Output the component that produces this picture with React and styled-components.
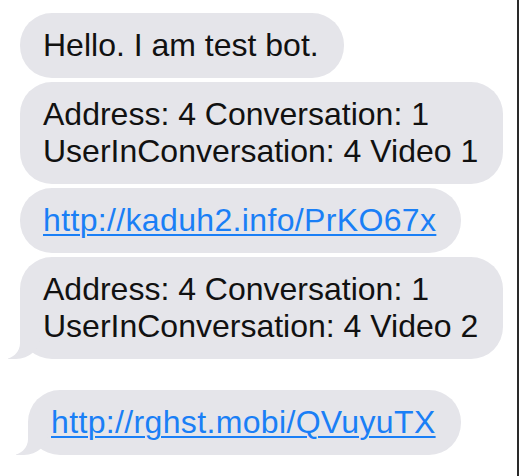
import React from "react";
import styled, { createGlobalStyle, css } from "styled-components";

const Global = createGlobalStyle`
  html, body { margin: 0; padding: 0; background: #fff; }
  body { font-family: "Liberation Sans", Arial, sans-serif; }
`;

const Page = styled.div`
  box-sizing: border-box;
  width: 519px;
  height: 476px;
  border-right: 2px solid #2a2a2a;
  padding: 13px 0 0 20px;
  display: flex;
  flex-direction: column;
  align-items: flex-start;
  gap: 4px;
  overflow: hidden;
`;

const Bubble = styled.div`
  position: relative;
  box-sizing: border-box;
  background: #e5e5ea;
  color: #111;
  font-size: 32px;
  line-height: 37px;
  padding: 14px 25px 14px 23px;
  border-radius: 32px;
  margin-left: ${(p) => p.$indent || 0}px;
  margin-top: ${(p) => p.$offset || 0}px;
  white-space: nowrap;

  ${(p) =>
    p.$tail &&
    css`
      &::before {
        content: "";
        position: absolute;
        z-index: 0;
        bottom: 0;
        left: -12px;
        width: 32px;
        height: 34px;
        background: #e5e5ea;
        border-bottom-right-radius: 24px 22px;
      }
      &::after {
        content: "";
        position: absolute;
        z-index: 1;
        bottom: 0;
        left: -34px;
        width: 34px;
        height: 34px;
        background: #fff;
        border-bottom-right-radius: 16px;
      }
    `}
`;

const Text = styled.span`
  position: relative;
  z-index: 2;
`;

const Link = styled.a`
  position: relative;
  z-index: 2;
  color: #1a7ff6;
  letter-spacing: 0.35px;
  text-decoration: underline;
  text-decoration-thickness: 1.5px;
  text-underline-offset: 3px;
`;

export default function App() {
  return (
    <>
      <Global />
      <Page>
        <Bubble>
          <Text>Hello. I am test bot.</Text>
        </Bubble>
        <Bubble>
          <Text>
            Address: 4 Conversation: 1
            <br />
            UserInConversation: 4 Video 1
          </Text>
        </Bubble>
        <Bubble>
          <Link href="#">http://kaduh2.info/PrKO67x</Link>
        </Bubble>
        <Bubble $tail>
          <Text>
            Address: 4 Conversation: 1
            <br />
            UserInConversation: 4 Video 2
          </Text>
        </Bubble>
        <Bubble $tail $indent={8} $offset={27}>
          <Link href="#">http://rghst.mobi/QVuyuTX</Link>
        </Bubble>
      </Page>
    </>
  );
}
